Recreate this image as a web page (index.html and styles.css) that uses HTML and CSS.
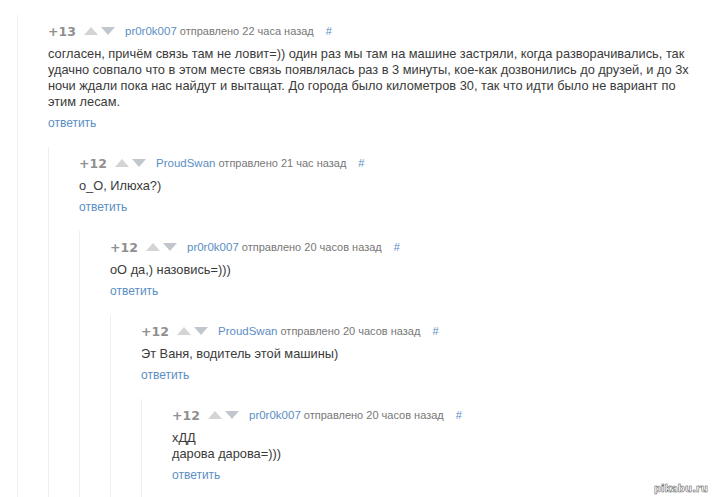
FILE: index.html
```html
<!DOCTYPE html>
<html lang="ru">
<head>
    <meta charset="UTF-8">
    <title>Комментарии</title>
    <link rel="stylesheet" href="styles.css">
</head>
<body>
    <div class="comments">
        <div class="comment">
            <div class="comment-head">
                <span class="rating">+13</span>
                <span class="vote up"></span>
                <span class="vote down"></span>
                <a class="author" href="#">pr0r0k007</a>
                <span class="date">отправлено 22 часа назад</span>
                <a class="anchor" href="#">#</a>
            </div>
            <div class="comment-text">согласен, причём связь там не ловит=)) один раз мы там на машине застряли, когда разворачивались, так удачно совпало что в этом месте связь появлялась раз в 3 минуты, кое-как дозвонились до друзей, и до 3х ночи ждали пока нас найдут и вытащат. До города было километров 30, так что идти было не вариант по этим лесам.</div>
            <a class="reply" href="#">ответить</a>

            <div class="comment">
                <div class="comment-head">
                    <span class="rating">+12</span>
                    <span class="vote up"></span>
                    <span class="vote down"></span>
                    <a class="author" href="#">ProudSwan</a>
                    <span class="date">отправлено 21 час назад</span>
                    <a class="anchor" href="#">#</a>
                </div>
                <div class="comment-text">o_O, Илюха?)</div>
                <a class="reply" href="#">ответить</a>

                <div class="comment">
                    <div class="comment-head">
                        <span class="rating">+12</span>
                        <span class="vote up"></span>
                        <span class="vote down"></span>
                        <a class="author" href="#">pr0r0k007</a>
                        <span class="date">отправлено 20 часов назад</span>
                        <a class="anchor" href="#">#</a>
                    </div>
                    <div class="comment-text">оО да,) назовись=)))</div>
                    <a class="reply" href="#">ответить</a>

                    <div class="comment">
                        <div class="comment-head">
                            <span class="rating">+12</span>
                            <span class="vote up"></span>
                            <span class="vote down"></span>
                            <a class="author" href="#">ProudSwan</a>
                            <span class="date">отправлено 20 часов назад</span>
                            <a class="anchor" href="#">#</a>
                        </div>
                        <div class="comment-text">Эт Ваня, водитель этой машины)</div>
                        <a class="reply" href="#">ответить</a>

                        <div class="comment">
                            <div class="comment-head">
                                <span class="rating">+12</span>
                                <span class="vote up"></span>
                                <span class="vote down"></span>
                                <a class="author" href="#">pr0r0k007</a>
                                <span class="date">отправлено 20 часов назад</span>
                                <a class="anchor" href="#">#</a>
                            </div>
                            <div class="comment-text">хДД<br>дарова дарова=)))</div>
                            <a class="reply" href="#">ответить</a>
                        </div>
                    </div>
                </div>
            </div>
        </div>
    </div>

    <div class="watermark">pikabu.ru</div>
</body>
</html>
```

FILE: styles.css
```css
body {
    margin: 0;
    padding: 15px 0 0 17px;
    background-color: #fff;
    font-family: "Liberation Sans", Arial, sans-serif;
    color: #3a3a3a;
    overflow: hidden;
}

.comments {
    width: 673px;
}

.comment {
    border-left: 1px solid #eeeeee;
    padding: 7px 0 40px 30px;
}

.comment .comment {
    margin-top: 16px;
    padding-left: 30px;
}

.comment-head {
    display: flex;
    align-items: center;
    height: 18px;
    white-space: nowrap;
}

.rating {
    font-family: "DejaVu Sans", Verdana, sans-serif;
    font-weight: bold;
    font-size: 12.5px;
    color: #8f8f8f;
    width: 36px;
}

.vote {
    width: 0;
    height: 0;
    border-left: 7px solid transparent;
    border-right: 7px solid transparent;
}

.vote.up {
    border-bottom: 8px solid #d4d4d4;
    margin-right: 3px;
}

.vote.down {
    border-top: 8px solid #c2c7ce;
    margin-right: 10px;
}

.author {
    font-size: 11.5px;
    color: #5b8ec4;
    text-decoration: none;
    margin-right: 3px;
}

.date {
    font-size: 11px;
    color: #777;
}

.anchor {
    font-size: 11px;
    color: #5b8ec4;
    text-decoration: none;
    margin-left: 12px;
}

.comment-text {
    margin-top: 6px;
    font-size: 12.8px;
    line-height: 16px;
}

.reply {
    display: block;
    margin-top: 5px;
    font-size: 12px;
    line-height: 16px;
    color: #5b8ec4;
    text-decoration: none;
}

.watermark {
    position: absolute;
    right: 10px;
    bottom: 3px;
    font-family: "DejaVu Sans", sans-serif;
    font-size: 10px;
    font-weight: bold;
    color: #fff;
    -webkit-text-stroke: 0.4px #555;
    text-shadow: 0 0 1px #888;
}
```
